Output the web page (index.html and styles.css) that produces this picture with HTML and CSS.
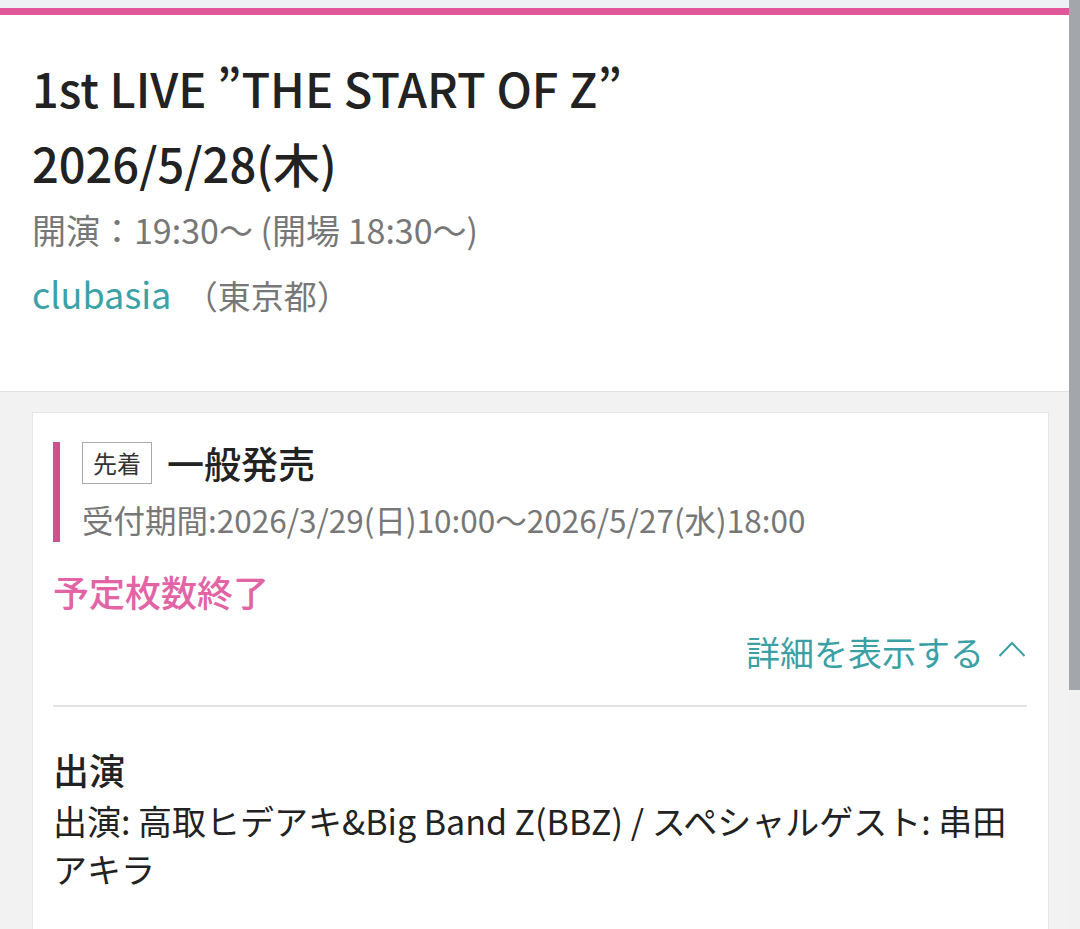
FILE: index.html
```html
<!DOCTYPE html>
<html lang="ja">
<head>
<meta charset="utf-8">
<title>1st LIVE THE START OF Z</title>
<link rel="stylesheet" href="styles.css">
</head>
<body>
<div class="topbar"></div>
<header class="event">
  <h1 class="event-title">1st LIVE ”THE START OF Z”<br>2026/5/28(木)</h1>
  <p class="event-time">開演：19:30〜 (開場 18:30〜)</p>
  <p class="event-venue"><span class="venue-name">clubasia</span> （東京都）</p>
</header>
<main class="sales">
  <section class="sale-card">
    <div class="sale-head">
      <div class="sale-title-row">
        <span class="badge">先着</span>
        <span class="sale-title">一般発売</span>
      </div>
      <div class="sale-period">受付期間:2026/3/29(日)10:00〜2026/5/27(水)18:00</div>
    </div>
    <div class="sale-status">予定枚数終了</div>
    <div class="detail-toggle">
      <span>詳細を表示する</span>
      <svg class="chev" width="28" height="18" viewBox="0 0 28 18"><path d="M1.5 16 L14 3 L26.5 16" fill="none" stroke="#3b9fa6" stroke-width="2"/></svg>
    </div>
    <div class="detail">
      <h2 class="detail-heading">出演</h2>
      <p class="detail-body">出演: 高取ヒデアキ&amp;Big Band Z(BBZ) / スペシャルゲスト: 串田アキラ</p>
    </div>
  </section>
</main>
<div class="scrollbar"><div class="scroll-thumb"></div></div>
</body>
</html>
```

FILE: styles.css
```css
* { box-sizing: border-box; }
html, body { margin: 0; padding: 0; }
body {
  font-family: "Noto Sans CJK JP", "Noto Sans", sans-serif;
  background: #f2f2f2;
  color: #222;
  width: 1080px;
  height: 929px;
  overflow: hidden;
}
.topbar {
  height: 15px;
  background: #eef2f4;
  border-bottom: 7px solid #e0579a;
}
.event {
  background: #fff;
  border-bottom: 1px solid #e2e2e2;
  padding: 35px 33px 71px 32px;
}
.event-title {
  margin: 0;
  font-size: 47px;
  font-weight: 500;
  line-height: 75px;
  color: #222;
}
.event-time {
  margin: 5px 0 0;
  font-size: 34px;
  line-height: 50px;
  color: #777;
}
.event-venue {
  margin: 13px 0 0;
  font-size: 33px;
  line-height: 50px;
  color: #777;
}
.venue-name {
  font-size: 36px;
  color: #3ba2a8;
  margin-right: 6px;
}
.sales {
  padding: 20px 31px 0 32px;
}
.sale-card {
  background: #fff;
  border: 1px solid #e6e6e6;
  border-bottom: none;
  padding: 29px 21px 0 20px;
  height: 517px;
}
.sale-head {
  border-left: 7px solid #d3508e;
  padding-left: 22px;
}
.sale-title-row {
  display: flex;
  align-items: flex-start;
  gap: 15px;
  height: 50px;
}
.badge {
  display: inline-block;
  border: 1px solid #aaa;
  font-size: 24px;
  line-height: 40px;
  padding: 0 10px;
  color: #333;
}
.sale-title {
  font-size: 37px;
  line-height: 42px;
  font-weight: 500;
  color: #222;
}
.sale-period {
  margin-top: 4px;
  font-size: 31.5px;
  line-height: 46px;
  color: #777;
}
.sale-status {
  margin-top: 24px;
  font-size: 36px;
  line-height: 50px;
  color: #e264a5;
  font-weight: 500;
}
.detail-toggle {
  margin-top: 11px;
  display: flex;
  justify-content: flex-end;
  align-items: center;
  gap: 14px;
  font-size: 34px;
  line-height: 50px;
  color: #3b9fa6;
  padding-right: 1px;
}
.chev { margin-top: -6px; }
.detail {
  margin-top: 28px;
  border-top: 2px solid #e4e4e4;
  padding-top: 37px;
}
.detail-heading {
  margin: 0;
  font-size: 36px;
  line-height: 50px;
  font-weight: 500;
  color: #222;
}
.detail-body {
  margin: 3px 0 0;
  font-size: 34px;
  line-height: 48px;
  color: #222;
}
.scrollbar {
  position: fixed;
  top: 0;
  right: 0;
  width: 11px;
  height: 929px;
  background: #f1f1f1;
}
.scroll-thumb {
  height: 690px;
  background: #a3a7ab;
}
```
